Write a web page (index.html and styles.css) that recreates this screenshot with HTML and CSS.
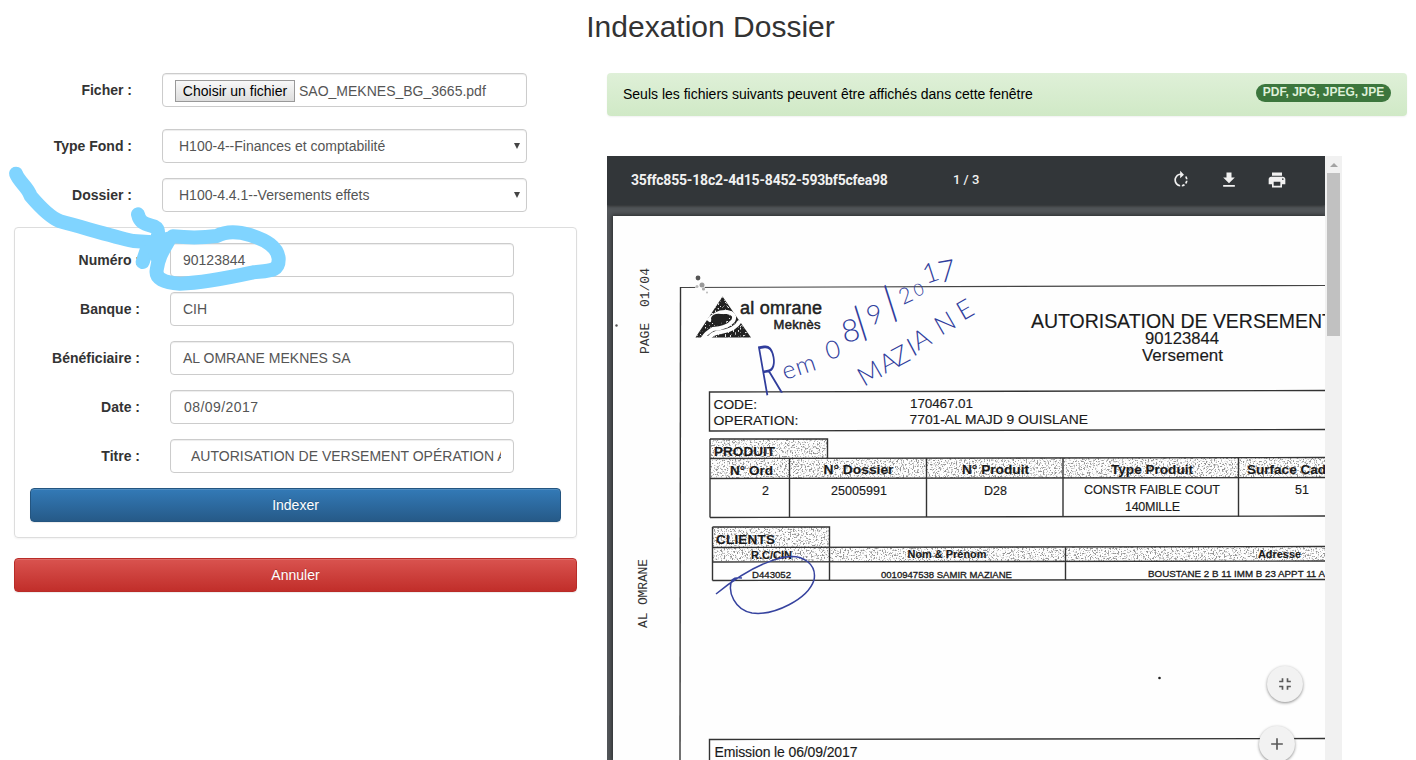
FILE: index.html
```html
<!DOCTYPE html>
<html lang="fr">
<head>
<meta charset="utf-8">
<title>Indexation Dossier</title>
<link rel="stylesheet" href="styles.css">
</head>
<body>
<h1 class="title">Indexation Dossier</h1>
<main class="columns">
  <form class="form">
    <div class="row row-file">
      <label class="label">Ficher :</label>
      <div class="control file"><span class="file-btn">Choisir un fichier</span><span>SAO_MEKNES_BG_3665.pdf</span></div>
    </div>
    <div class="row">
      <label class="label">Type Fond :</label>
      <div class="control select"><span>H100-4--Finances et comptabilité</span><svg class="caret" viewBox="0 0 6 6"><path d="M0 0h6L3 6z"/></svg></div>
    </div>
    <div class="row">
      <label class="label">Dossier :</label>
      <div class="control select"><span>H100-4.4.1--Versements effets</span><svg class="caret" viewBox="0 0 6 6"><path d="M0 0h6L3 6z"/></svg></div>
    </div>
    <section class="panel">
      <div class="row"><label class="label">Numéro :</label><div class="control">90123844</div></div>
      <div class="row"><label class="label">Banque :</label><div class="control">CIH</div></div>
      <div class="row"><label class="label">Bénéficiaire :</label><div class="control">AL OMRANE MEKNES SA</div></div>
      <div class="row"><label class="label">Date :</label><div class="control date">08/09/2017</div></div>
      <div class="row"><label class="label">Titre :</label><div class="control"><span class="clip">AUTORISATION DE VERSEMENT OPÉRATION A</span></div></div>
      <div class="btn btn-primary">Indexer</div>
    </section>
    <div class="btn btn-danger">Annuler</div>
  </form>

  <section class="preview">
    <div class="alert"><span>Seuls les fichiers suivants peuvent être affichés dans cette fenêtre</span><span class="badge">PDF, JPG, JPEG, JPE</span></div>
    <div class="viewer">
      <div class="viewport">
        <div class="toolbar">
          <span class="docname">35ffc855-18c2-4d15-8452-593bf5cfea98</span>
          <span class="pages">1 / 3</span>
          <div class="tools">
            <svg class="icon" viewBox="0 0 24 24"><path d="M15.55 5.55L11 1v3.07C7.06 4.56 4 7.92 4 12s3.05 7.44 7 7.93v-2.02c-2.84-.48-5-2.94-5-5.91s2.16-5.43 5-5.91V10l4.55-4.45zM19.93 11c-.17-1.39-.72-2.73-1.62-3.89l-1.42 1.42c.54.75.88 1.6 1.02 2.47h2.02zM13 17.9v2.02c1.39-.17 2.74-.71 3.9-1.61l-1.44-1.44c-.75.54-1.59.89-2.46 1.03zm3.89-2.42l1.42 1.41c.9-1.16 1.45-2.5 1.62-3.89h-2.02c-.14.87-.48 1.72-1.02 2.48z"/></svg>
            <svg class="icon" viewBox="0 0 24 24"><path d="M19 9h-4V3H9v6H5l7 7 7-7zM5 18v2h14v-2H5z"/></svg>
            <svg class="icon" viewBox="0 0 24 24"><path d="M19 8H5c-1.66 0-3 1.34-3 3v6h4v4h12v-4h4v-6c0-1.66-1.34-3-3-3zm-3 11H8v-5h8v5zm3-7c-.55 0-1-.45-1-1s.45-1 1-1 1 .45 1 1-.45 1-1 1zm-1-9H6v4h12V3z"/></svg>
          </div>
        </div>
        <svg class="scan" viewBox="613 216 712 544">
          <defs>
            <filter id="grain" x="0" y="0" width="1" height="1">
              <feTurbulence type="fractalNoise" baseFrequency=".62" numOctaves="2" seed="4"/>
              <feColorMatrix values="0 0 0 0 .3  0 0 0 0 .3  0 0 0 0 .3  6 0 0 0 -3.1"/>
              <feComposite in2="SourceGraphic" operator="in"/>
            </filter>
            <filter id="speck" x="0" y="0" width="1" height="1">
              <feTurbulence type="fractalNoise" baseFrequency=".6" numOctaves="2" seed="9"/>
              <feColorMatrix values="0 0 0 0 .8  0 0 0 0 .8  0 0 0 0 .8  9 0 0 0 -5.4"/>
              <feComposite in2="SourceGraphic" operator="in"/>
            </filter>
          </defs>
          <rect x="613" y="216" width="712" height="544" fill="#fefefe"/>
          <g class="mono">
            <text transform="translate(649 354) rotate(-90)" textLength="86" xml:space="preserve">PAGE  01/04</text>
            <text transform="translate(647 628) rotate(-90)" textLength="69">AL OMRANE</text>
          </g>
          <circle cx="616.500" cy="325.500" r="1.200" fill="#555"/>
          <circle cx="1159.500" cy="678" r="1.300" fill="#222"/>
          <path class="rule-fine" d="M680 287.500L1325 285.500"/>
          <circle cx="700" cy="286" r="5" fill="#fefefe"/>
          <g fill="#555"><circle cx="698" cy="278" r="2.400"/><circle cx="702" cy="285" r="2.500" opacity=".6"/><circle cx="697" cy="286.500" r="1.500" opacity=".4"/><circle cx="703.500" cy="289" r="1.600" opacity=".5"/><circle cx="707" cy="292.500" r="1" opacity=".4"/></g>

          <g filter="url(#grain)">
            <path d="M710 439h117v19h498v20H710zM713 527h116v20h496v14H713z"/>
          </g>
          <g class="rules">
            <path d="M680.500 287L680 760" />
            <path d="M1325 390.500L709.500 392V431L1325 429.500"/>
            <path d="M710 439H827.500V458M710 458.500L1325 457.500M710 478.500L1325 477.500M710 517.500L1325 516M710 439V517.500"/>
            <path d="M789.500 458V517M926.500 458V517M1063 458V516.500M1238.500 458V516.500"/>
            <path d="M712.500 527H829.500V580M712.500 547.500L1325 546.500M712.500 562L1325 561M712.500 580.500L1325 579.500M712.500 527V580.500M1065.500 547V580"/>
            <path d="M1325 738.500L709.500 739.500V760"/>
          </g>

          <path class="mark" d="M722.500 296.500L751 337.500H695.500z"/>
          <path d="M722.500 296.500L751 337.500H695.500z" filter="url(#speck)"/>
          <path class="swoosh" d="M708 321Q716 311 727 312Q737 314 733 321Q727 328 713 329Q706 333 703 338H709Q712 333 721 332Q735 330 740 321"/>
          <path class="mark" d="M711 318q2-5 10-4 9 0 8 5-3 4-11 4-7 1-7-5z"/>

          <g class="logo"><text x="740" y="314" font-size="18" textLength="82">al omrane</text><text x="773.500" y="329" font-size="13" textLength="47">Meknès</text></g>
          <g class="print">
            <text x="1031" y="328" font-size="19.500" textLength="303">AUTORISATION DE VERSEMENT</text>
            <text x="1145" y="344" font-size="16" textLength="74" lengthAdjust="spacingAndGlyphs">90123844</text>
            <text x="1142" y="360.500" font-size="16" textLength="81" lengthAdjust="spacingAndGlyphs">Versement</text>
            <text x="713.500" y="408.500" font-size="13.500" textLength="43.500" lengthAdjust="spacingAndGlyphs">CODE:</text>
            <text x="713.500" y="424.500" font-size="13.500" textLength="85" lengthAdjust="spacingAndGlyphs">OPERATION:</text>
            <text x="910" y="408" font-size="13.500" textLength="63">170467.01</text>
            <text x="909.500" y="424" font-size="13.500" textLength="178.500" lengthAdjust="spacingAndGlyphs">7701-AL MAJD 9 OUISLANE</text>
            <text x="762" y="495" font-size="12.500">2</text>
            <text x="831" y="494.500" font-size="12.500" textLength="56">25005991</text>
            <text x="984" y="494.500" font-size="12.500" textLength="23">D28</text>
            <text x="1084" y="494" font-size="12.500" textLength="136">CONSTR FAIBLE COUT</text>
            <text x="1125" y="510.500" font-size="12.500" textLength="55">140MILLE</text>
            <text x="1295" y="494" font-size="12.500">51</text>
            <text x="714.500" y="756.500" font-size="14" textLength="143">Emission le 06/09/2017</text>
          </g>
          <g class="print bold">
            <text x="714" y="455.500" font-size="13.500" textLength="61">PRODUIT</text>
            <text x="730" y="474.500" font-size="13" textLength="43" lengthAdjust="spacingAndGlyphs">N° Ord</text>
            <text x="823.500" y="474" font-size="13" textLength="70" lengthAdjust="spacingAndGlyphs">N° Dossier</text>
            <text x="962" y="474" font-size="13" textLength="67" lengthAdjust="spacingAndGlyphs">N° Produit</text>
            <text x="1111" y="474" font-size="13" textLength="82" lengthAdjust="spacingAndGlyphs">Type Produit</text>
            <text x="1247" y="473.500" font-size="13" textLength="79" lengthAdjust="spacingAndGlyphs">Surface Cad</text>
            <text x="716" y="543.500" font-size="13.500" textLength="59">CLIENTS</text>
            <text x="751" y="558.500" font-size="11" textLength="41" lengthAdjust="spacingAndGlyphs">R.C/CIN</text>
            <text x="907.500" y="558" font-size="11" textLength="79" lengthAdjust="spacingAndGlyphs">Nom &amp; Prénom</text>
            <text x="1258" y="557.500" font-size="11" textLength="43" lengthAdjust="spacingAndGlyphs">Adresse</text>
          </g>
          <g class="print small">
            <text x="752" y="578" textLength="39" lengthAdjust="spacingAndGlyphs">D443052</text>
            <text x="881" y="577.500" textLength="131" lengthAdjust="spacingAndGlyphs">0010947538 SAMIR MAZIANE</text>
            <text x="1148" y="577" textLength="177" lengthAdjust="spacingAndGlyphs">BOUSTANE 2 B 11 IMM B 23 APPT 11 A</text>
          </g>

          <g class="ink">
            <text transform="translate(763 396) rotate(-10) scale(.85 1.750)" font-size="40">R</text>
            <text transform="translate(785 380) rotate(-18)" font-size="25" textLength="34">em</text>
            <text transform="translate(828 360) rotate(-15)" font-size="25">0</text>
            <text transform="translate(844 343) rotate(-12)" font-size="31">8</text>
            <text transform="translate(863 341) rotate(-40)" font-size="44">/</text>
            <text transform="translate(870 326) rotate(-18)" font-size="27">9</text>
            <text transform="translate(893 322) rotate(-40)" font-size="46">/</text>
            <text transform="translate(903 305) rotate(-25)" font-size="22">2</text>
            <text transform="translate(916 297) rotate(-20)" font-size="17">0</text>
            <text transform="translate(926 284) rotate(-18)" font-size="27">1</text>
            <text transform="translate(940 283) rotate(-10)" font-size="30">7</text>
            <text font-size="26" x="864 885 898 913 918 941 963" y="387 374 367 357 351 336 321" rotate="-30 -28 -28 -28 -28 -30 -30">MAZIANE</text>
          </g>
          <path class="loop" d="M716 594C738 576 760 562 785 557C804 554 817 565 814 580C808 599 774 616 752 613C735 610 727 592 732 580Q735 577 742 578"/>
        </svg>
        <div class="fab fab-fit"><svg class="icon" viewBox="0 0 24 24"><path d="M5 16h3v3h2v-5H5v2zm3-8H5v2h5V5H8v3zm6 11h2v-3h3v-2h-5v5zm2-11V5h-2v5h5V8h-3z"/></svg></div>
        <div class="fab fab-zoom"><svg class="icon" viewBox="0 0 24 24"><path d="M19 13h-6v6h-2v-6H5v-2h6V5h2v6h6v2z"/></svg></div>
      </div>
      <div class="scrollbar"><svg class="up" viewBox="0 0 8 4"><path d="M0 4L4 0l4 4z"/></svg><div class="thumb"></div></div>
    </div>
  </section>
</main>
<svg class="marker" viewBox="0 0 900 720">
  <path d="M48 341C58 368 82 378 92 408C115 435 150 472 180 484C250 502 330 527 400 543L480 548"/>
  <path d="M414 463C420 492 440 492 464 500C480 508 474 530 470 545L445 555L428 606"/>
  <path d="M518 529C580 535 620 532 650 528C680 512 720 516 750 525C800 541 832 560 836 595C838 635 810 632 760 637C700 650 620 668 540 671C490 668 466 655 470 630C475 590 490 570 510 535L455 550L470 590"/>
</svg>
</body>
</html>
```
FILE: styles.css
```css
* { box-sizing: border-box; }

body {
  margin: 0;
  height: 760px;
  overflow: hidden;
  position: relative;
  background: #fff;
  color: #333;
  font: 14px/20px "Liberation Sans", Arial, sans-serif;
}

.title {
  margin: 0;
  padding: 10px 0 30px 5px;
  font-size: 30px;
  line-height: 33px;
  font-weight: 400;
  text-align: center;
}

.columns {
  display: grid;
  grid-template-columns: 563px 800px;
  column-gap: 30px;
  padding-left: 14px;
}

.form { display: flex; flex-direction: column; gap: 15px; }

.row {
  display: grid;
  grid-template-columns: 118px 365px;
  column-gap: 30px;
  align-items: center;
}

.row-file { margin-bottom: 7px; }

.label { font-weight: 700; text-align: right; }

.control {
  height: 34px;
  display: flex;
  align-items: center;
  padding: 0 12px;
  border: 1px solid #ccc;
  border-radius: 4px;
  box-shadow: inset 0 1px 1px rgba(0, 0, 0, .075);
  color: #555;
  white-space: nowrap;
  overflow: hidden;
}

.file { gap: 4px; padding-top: 2px; }

.file-btn {
  width: 120px;
  height: 22px;
  border: 1px solid #999;
  background: linear-gradient(#f8f8f8, #ddd);
  color: #000;
  text-align: center;
}

.select { padding: 0 6px 0 16px; justify-content: space-between; }

.caret { width: 6px; height: 6px; fill: #444; }

.date { padding-left: 13px; letter-spacing: .45px; }

.clip { overflow: hidden; padding-left: 8px; }

.panel {
  display: flex;
  flex-direction: column;
  gap: 15px;
  padding: 15px;
  border: 1px solid #ddd;
  border-radius: 4px;
  box-shadow: 0 1px 2px rgba(0, 0, 0, .05);
  margin-bottom: 5px;
}

.panel .row { grid-template-columns: 110px 344px; }

.btn {
  height: 34px;
  border: 1px solid;
  border-radius: 4px;
  color: #fff;
  line-height: 32px;
  text-align: center;
  text-shadow: 0 -1px 0 rgba(0, 0, 0, .2);
  box-shadow: inset 0 1px 0 rgba(255, 255, 255, .15), 0 1px 1px rgba(0, 0, 0, .075);
}

.btn-primary { background: linear-gradient(#337ab7, #265a88); border-color: #245580; }
.btn-danger { background: linear-gradient(#d9534f, #c12e2a); border-color: #b92c28; }

.alert {
  height: 43px;
  display: flex;
  justify-content: space-between;
  align-items: flex-start;
  padding: 11px 16px;
  border-radius: 4px;
  background: linear-gradient(#dff0d8, #d0e9c6);
  box-shadow: 0 1px 2px rgba(0, 0, 0, .06);
  color: #000;
}

.badge {
  width: 135px;
  height: 18px;
  border-radius: 10px;
  background: #3c763d;
  color: #dff0d8;
  font-size: 12px;
  font-weight: 700;
  line-height: 17px;
  text-align: center;
  white-space: nowrap;
}

.viewer { display: flex; width: 735px; height: 604px; margin-top: 40px; }

.viewport {
  position: relative;
  width: 718px;
  background: #525659;
  overflow: hidden;
}

.toolbar {
  height: 49px;
  display: flex;
  align-items: center;
  padding: 0 0 1px 24px;
  background: #323639;
  box-shadow: 0 1px 3px rgba(0, 0, 0, .5);
  color: #f1f1f1;
  font-family: Roboto, sans-serif;
}

.docname { width: 322px; font-weight: 700; letter-spacing: -.18px; }
.pages { width: 218px; font-size: 13px; font-weight: 500; }
.tools { display: flex; gap: 28px; }
.icon { width: 20px; height: 20px; fill: #f1f1f1; }

.scan {
  display: block;
  width: 712px;
  height: 544px;
  margin: 11px 0 0 6px;
  box-shadow: 0 0 4px 1px rgba(0, 0, 0, .5);
  font-family: "Liberation Sans", Arial, sans-serif;
}

.mono { font: 13px "Liberation Mono", monospace; fill: #333; }
.rules { fill: none; stroke: #333; stroke-width: 1.4; }
.rule-fine { fill: none; stroke: #444; stroke-width: 1.2; }
.mark { fill: #222; }
.swoosh { fill: none; stroke: #fefefe; stroke-width: 4; }
.logo { fill: #222; stroke: #222; stroke-width: .5; }
.print { fill: #1a1a1a; stroke: #1a1a1a; stroke-width: .15; }
.bold { font-weight: 700; }
.small { font-size: 9.5px; stroke-width: .3; }
.ink { fill: #303d9c; font-family: Lato, sans-serif; font-weight: 300; }
.loop { fill: none; stroke: #36439f; stroke-width: 1.5; }

.fab {
  position: absolute;
  width: 36px;
  height: 36px;
  display: flex;
  align-items: center;
  justify-content: center;
  border-radius: 50%;
  background: #f2f2f2;
  box-shadow: 0 1px 3px rgba(0, 0, 0, .45);
}

.fab .icon { fill: #5a5a5a; }
.fab-fit { left: 660px; top: 510px; }
.fab-zoom { left: 652px; top: 570px; }

.scrollbar {
  width: 17px;
  display: flex;
  flex-direction: column;
  align-items: center;
  background: #f1f1f1;
}

.up { width: 8px; height: 4px; margin: 7px 0 6px; fill: #a3a3a3; }
.thumb { width: 13px; height: 163px; background: #c1c1c1; }

.marker {
  position: absolute;
  left: 0;
  top: 60px;
  width: 300px;
  height: 240px;
  fill: none;
  stroke: #80d4ff;
  stroke-width: 42;
  stroke-linecap: round;
  stroke-linejoin: round;
  pointer-events: none;
}
```
